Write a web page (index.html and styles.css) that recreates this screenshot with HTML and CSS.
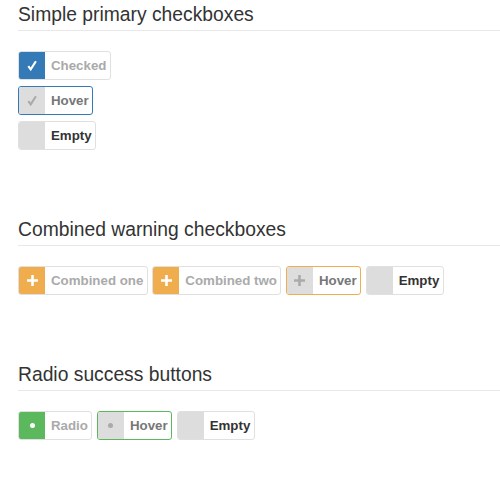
FILE: index.html
```html
<!DOCTYPE html>
<html>
<head>
<meta charset="utf-8">
<link rel="stylesheet" href="styles.css">
</head>
<body>
<div class="page">
  <section class="section">
    <h3 class="title">Simple primary checkboxes</h3>
    <div class="stack">
      <div class="btn primary checked"><span class="ico"><svg width="10" height="11" viewBox="0 0 10 11"><path d="M1.3 6.2 L3.7 9.4 L8.9 1.2" fill="none" stroke="currentColor" stroke-width="2.1"/></svg></span><span class="lbl">Checked</span></div>
      <div class="btn primary hover"><span class="ico"><svg width="10" height="11" viewBox="0 0 10 11"><path d="M1.3 6.2 L3.7 9.4 L8.9 1.2" fill="none" stroke="currentColor" stroke-width="2.1"/></svg></span><span class="lbl">Hover</span></div>
      <div class="btn empty"><span class="ico"></span><span class="lbl">Empty</span></div>
    </div>
  </section>
  <section class="section">
    <h3 class="title">Combined warning checkboxes</h3>
    <div class="row">
      <div class="btn warning checked"><span class="ico"><svg width="11" height="11" viewBox="0 0 11 11"><path d="M5.5 0 V11 M0 5.5 H11" stroke="currentColor" stroke-width="2.6"/></svg></span><span class="lbl">Combined one</span></div>
      <div class="btn warning checked"><span class="ico"><svg width="11" height="11" viewBox="0 0 11 11"><path d="M5.5 0 V11 M0 5.5 H11" stroke="currentColor" stroke-width="2.6"/></svg></span><span class="lbl">Combined two</span></div>
      <div class="btn warning hover"><span class="ico"><svg width="11" height="11" viewBox="0 0 11 11"><path d="M5.5 0 V11 M0 5.5 H11" stroke="currentColor" stroke-width="2.6"/></svg></span><span class="lbl">Hover</span></div>
      <div class="btn empty"><span class="ico"></span><span class="lbl">Empty</span></div>
    </div>
  </section>
  <section class="section">
    <h3 class="title">Radio success buttons</h3>
    <div class="row">
      <div class="btn success checked"><span class="ico"><span class="dot"></span></span><span class="lbl">Radio</span></div>
      <div class="btn success hover"><span class="ico"><span class="dot"></span></span><span class="lbl">Hover</span></div>
      <div class="btn empty"><span class="ico"></span><span class="lbl">Empty</span></div>
    </div>
  </section>
</div>
</body>
</html>
```
FILE: styles.css
```css
html, body {
  margin: 0;
  padding: 0;
  background: #fff;
}
body {
  font-family: "Liberation Sans", Arial, sans-serif;
  color: #333;
}
.page {
  padding: 3px 0 0 18px;
}
.section {
  margin-bottom: 68px;
}
.title {
  margin: 0 0 20px 0;
  font-size: 19.3px;
  font-weight: normal;
  line-height: 23px;
  color: #333;
  padding-bottom: 4px;
  border-bottom: 1px solid #e8e8e8;
}
.stack {
  display: flex;
  flex-direction: column;
  align-items: flex-start;
  gap: 6px;
}
.row {
  display: flex;
  gap: 4.5px;
}
.btn {
  display: flex;
  height: 27px;
  border: 1px solid #e0e0e0;
  border-radius: 3px;
  overflow: hidden;
}
.ico {
  width: 26px;
  display: flex;
  align-items: center;
  justify-content: center;
  background: #ddd;
  color: #aaa;
  margin: -1px 0 -1px -1px;
  padding: 1px 0 1px 1px;
}
.lbl {
  padding: 0 3.5px 0 6px;
  font-size: 13.3px;
  font-weight: bold;
  line-height: 27px;
  color: #333;
}
.checked .lbl { color: #aaa; }
.hover .lbl { color: #777; }
.checked .ico { color: #fff; }
.primary.checked .ico { background: #337ab7; }
.warning.checked .ico { background: #f0ad4e; }
.success.checked .ico { background: #5cb85c; }
.primary.hover { border-color: #337ab7; }
.warning.hover { border-color: #f0ad4e; }
.success.hover { border-color: #5cb85c; }
.hover .ico { margin: 0; padding: 0; width: 26px; }
.dot {
  width: 5px;
  height: 5px;
  border-radius: 50%;
  background: currentColor;
}
```
